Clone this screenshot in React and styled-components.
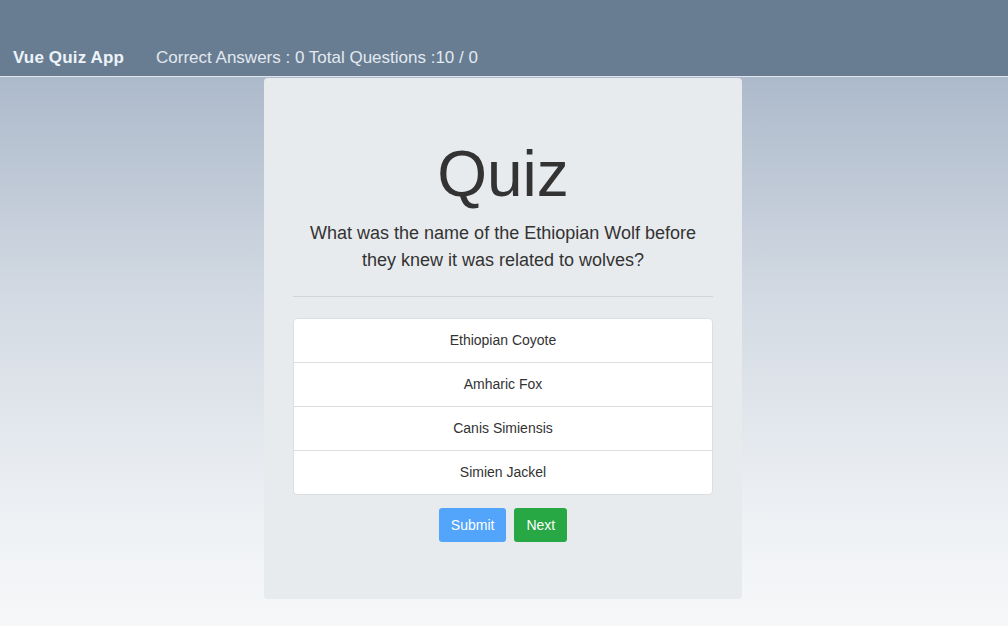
import React, { useState } from 'react'
import styled, { createGlobalStyle } from 'styled-components'

const questions = [
  {
    text: 'What was the name of the Ethiopian Wolf before they knew it was related to wolves?',
    answers: ['Ethiopian Coyote', 'Amharic Fox', 'Canis Simiensis', 'Simien Jackel'],
  },
]

const GlobalStyle = createGlobalStyle`
  html, body {
    margin: 0;
    padding: 0;
  }
  body {
    font-family: "Liberation Sans", Arial, sans-serif;
    color: #333;
    min-height: 626px;
    background: linear-gradient(to bottom, #adbacb 0px, #adbacb 78px, #d3dae3 300px, #eef1f4 520px, #f6f7f9 626px);
  }
`

const Navbar = styled.nav`
  height: 77px;
  background-color: #687d92;
  border-bottom: 1px solid #dfe5eb;
  display: flex;
  align-items: flex-end;
  padding: 0 13px 8px;
  box-sizing: border-box;
  font-size: 17px;
`

const Brand = styled.span`
  font-weight: bold;
  color: #edf3f9;
  letter-spacing: 0.15px;
`

const Stats = styled.span`
  margin-left: 32px;
  color: #e2e9f0;
`

const Main = styled.main`
  display: flex;
  justify-content: center;
  padding-right: 2px;
`

const Card = styled.section`
  width: 478px;
  box-sizing: border-box;
  margin-top: 1px;
  padding: 58px 29px 57px;
  background-color: #e8ebee;
  border-radius: 4px;
  text-align: center;
`

const Title = styled.h1`
  margin: 0;
  font-size: 64px;
  font-weight: 400;
  line-height: 1.2;
  color: #333;
`

const Question = styled.p`
  margin: 7px 0 0;
  font-size: 18px;
  line-height: 27px;
  color: #333;
`

const Divider = styled.hr`
  margin: 22px 0 21px;
  border: 0;
  border-top: 1px solid #d2d5d8;
`

const AnswerList = styled.ul`
  list-style: none;
  margin: 0;
  padding: 0;
  background: #fff;
  border: 1px solid #dcdfe2;
  border-radius: 4px;
`

const Answer = styled.li`
  padding: 12px;
  font-size: 14px;
  line-height: 19px;
  color: #333;
  cursor: pointer;
  background: ${p => (p.$selected ? '#f2f6fb' : 'transparent')};
  & + & {
    border-top: 1px solid #dcdfe2;
  }
`

const Actions = styled.div`
  display: flex;
  justify-content: center;
  gap: 8px;
  margin-top: 13px;
`

const Button = styled.button`
  height: 34px;
  padding: 0 12px;
  border: none;
  border-radius: 3px;
  font-family: "Liberation Sans", Arial, sans-serif;
  font-size: 14px;
  color: #fff;
  background-color: ${p => (p.$variant === 'success' ? '#28a745' : '#52a5fb')};
  cursor: pointer;
`

export default function App() {
  const [selected, setSelected] = useState(null)
  const q = questions[0]

  return (
    <>
      <GlobalStyle />
      <Navbar>
        <Brand>Vue Quiz App</Brand>
        <Stats>Correct Answers : 0 Total Questions :10 / 0</Stats>
      </Navbar>
      <Main>
        <Card>
          <Title>Quiz</Title>
          <Question>
            What was the name of the Ethiopian Wolf before
            <br />
            they knew it was related to wolves?
          </Question>
          <Divider />
          <AnswerList>
            {q.answers.map((a, i) => (
              <Answer key={a} $selected={selected === i} onClick={() => setSelected(i)}>
                {a}
              </Answer>
            ))}
          </AnswerList>
          <Actions>
            <Button>Submit</Button>
            <Button $variant="success">Next</Button>
          </Actions>
        </Card>
      </Main>
    </>
  )
}
